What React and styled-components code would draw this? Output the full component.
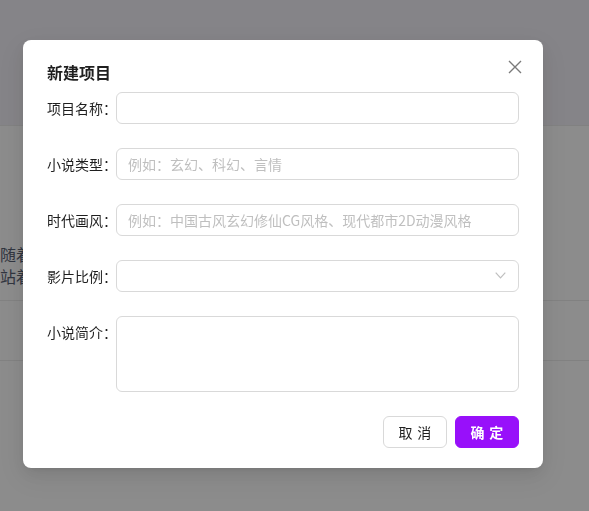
import React from "react";
import styled, { createGlobalStyle } from "styled-components";

const GlobalStyle = createGlobalStyle`
  html, body { margin: 0; padding: 0; height: 100%; }
  body {
    font-family: "Noto Sans CJK SC", "Noto Sans", sans-serif;
    font-size: 14px;
    color: rgba(0,0,0,0.88);
    overflow: hidden;
  }
  * { box-sizing: border-box; }
`;

const Page = styled.div`
  height: 100vh;
  background: #ffffff;
  display: flex;
  flex-direction: column;
`;

const PageHeader = styled.div`
  height: 126px;
  background: #f3f1f7;
  border-bottom: 1px solid #ececec;
  flex-shrink: 0;
`;

const PageSection = styled.div`
  padding: 117px 0 0 0;
  border-bottom: 1px solid #ececec;
  height: 175px;
`;

const PageText = styled.p`
  margin: 0;
  font-size: 16px;
  line-height: 22px;
  color: #5a6275;
  white-space: nowrap;
`;

const PageRow = styled.div`
  height: 60px;
  border-bottom: 1px solid #ececec;
`;

const Overlay = styled.div`
  position: fixed;
  inset: 0;
  background: rgba(0, 0, 0, 0.45);
  padding: 40px 0 0 23px;
`;

const Modal = styled.div`
  position: relative;
  width: 520px;
  background: #ffffff;
  border-radius: 8px;
  padding: 20px 24px 20px 24px;
  box-shadow: 0 6px 16px 0 rgba(0,0,0,0.08), 0 3px 6px -4px rgba(0,0,0,0.12), 0 9px 28px 8px rgba(0,0,0,0.05);
`;

const Title = styled.div`
  font-size: 16px;
  font-weight: 700;
  line-height: 24px;
  color: rgba(0,0,0,0.88);
  margin-bottom: 8px;
`;

const CloseButton = styled.button`
  position: absolute;
  top: 16px;
  right: 17px;
  width: 22px;
  height: 22px;
  padding: 0;
  border: none;
  background: transparent;
  display: flex;
  align-items: center;
  justify-content: center;
  cursor: pointer;
`;

const FormItem = styled.div`
  display: flex;
  align-items: ${(p) => (p.$top ? "flex-start" : "center")};
  margin-bottom: 24px;
`;

const Label = styled.label`
  width: 69px;
  flex-shrink: 0;
  font-size: 14px;
  line-height: 32px;
  color: rgba(0,0,0,0.88);
  white-space: nowrap;
`;

const Field = styled.div`
  position: relative;
  flex: 1;
  height: ${(p) => p.$h || 32}px;
  border: 1px solid #d9d9d9;
  border-radius: 6px;
  padding: 4px 11px;
  font-size: 14px;
  line-height: 22px;
  display: flex;
  align-items: ${(p) => (p.$h ? "flex-start" : "center")};
`;

const Placeholder = styled.span`
  color: #bfbfbf;
  white-space: nowrap;
`;

const Arrow = styled.svg`
  position: absolute;
  right: 12px;
  top: 50%;
  margin-top: -4px;
`;

const Footer = styled.div`
  display: flex;
  justify-content: flex-end;
  gap: 8px;
`;

const Button = styled.button`
  height: 32px;
  width: 64px;
  padding: 0;
  border-radius: 6px;
  font-family: inherit;
  font-size: 14px;
  line-height: 22px;
  white-space: nowrap;
  display: flex;
  align-items: center;
  justify-content: center;
  border: 1px solid ${(p) => (p.$primary ? "#9810fa" : "#d9d9d9")};
  background: ${(p) => (p.$primary ? "#9810fa" : "#ffffff")};
  color: ${(p) => (p.$primary ? "#ffffff" : "rgba(0,0,0,0.88)")};
  font-weight: ${(p) => (p.$primary ? 600 : 400)};
  cursor: pointer;
  span {
    letter-spacing: 0.34em;
    margin-right: -0.34em;
  }
`;

const fields = [
  { label: "项目名称", placeholder: "" },
  { label: "小说类型", placeholder: "例如：玄幻、科幻、言情" },
  { label: "时代画风", placeholder: "例如：中国古风玄幻修仙CG风格、现代都市2D动漫风格" },
];

export default function App() {
  return (
    <>
      <GlobalStyle />
      <Page>
        <PageHeader />
        <PageSection>
          <PageText>随着</PageText>
          <PageText>站着</PageText>
        </PageSection>
        <PageRow />
      </Page>
      <Overlay>
        <Modal>
          <Title>新建项目</Title>
          <CloseButton aria-label="关闭">
            <svg width="14" height="14" viewBox="0 0 14 14">
              <path d="M1 1 L13 13 M13 1 L1 13" stroke="#7a7a7a" strokeWidth="1.4" fill="none" />
            </svg>
          </CloseButton>
          {fields.map((f) => (
            <FormItem key={f.label}>
              <Label>{f.label}：</Label>
              <Field>{f.placeholder && <Placeholder>{f.placeholder}</Placeholder>}</Field>
            </FormItem>
          ))}
          <FormItem>
            <Label>影片比例：</Label>
            <Field>
              <Arrow width="11" height="7" viewBox="0 0 11 7">
                <path d="M0.7 0.7 L5.5 5.8 L10.3 0.7" stroke="#bfbfbf" strokeWidth="1.2" fill="none" />
              </Arrow>
            </Field>
          </FormItem>
          <FormItem $top>
            <Label>小说简介：</Label>
            <Field $h={76} />
          </FormItem>
          <Footer>
            <Button><span>取消</span></Button>
            <Button $primary><span>确定</span></Button>
          </Footer>
        </Modal>
      </Overlay>
    </>
  );
}
